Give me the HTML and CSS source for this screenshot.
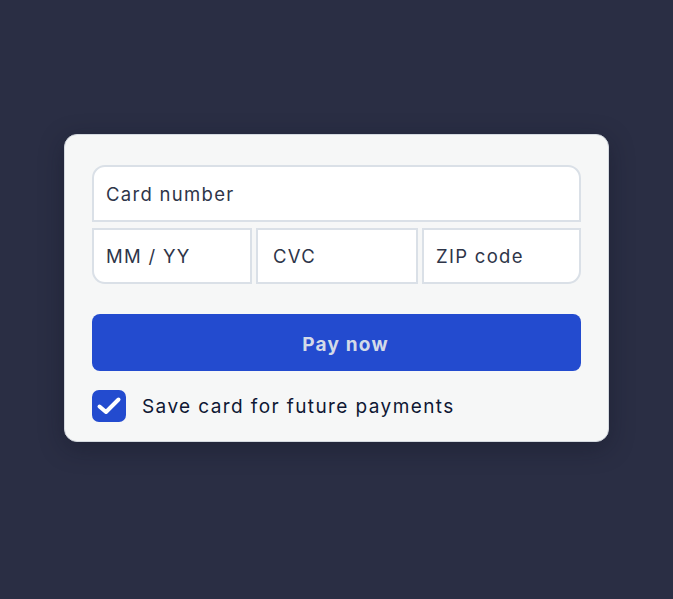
FILE: index.html
```html
<!DOCTYPE html>
<html lang="en">
<head>
<meta charset="utf-8">
<link rel="stylesheet" href="styles.css">
</head>
<body>
<div class="page">
  <form class="card">
    <div class="fields">
      <div class="field field-number">Card number</div>
      <div class="row">
        <div class="field field-exp">MM / YY</div>
        <div class="field field-cvc">CVC</div>
        <div class="field field-zip">ZIP code</div>
      </div>
    </div>
    <button type="button" class="pay">Pay now</button>
    <label class="save">
      <span class="check">
        <svg width="26" height="20" viewBox="0 0 26 20"><path d="M3.5 10.5 L10 16 L22.5 3.5" fill="none" stroke="#fff" stroke-width="4" stroke-linecap="round" stroke-linejoin="round"/></svg>
      </span>
      <span class="save-text">Save card for future payments</span>
    </label>
  </form>
</div>
</body>
</html>
```
FILE: styles.css
```css
html, body {
  margin: 0;
  padding: 0;
}
body {
  background: #2a2e44;
  font-family: Inter, "Open Sans", sans-serif;
  width: 673px;
  height: 599px;
  overflow: hidden;
}
.page {
  padding: 134px 0 0 64px;
}
.card {
  box-sizing: border-box;
  width: 545px;
  height: 308px;
  background: #f6f7f7;
  border: 1px solid #d4d9df;
  border-radius: 13px;
  padding: 30px 27px 0 27px;
  box-shadow: 0 6px 24px rgba(15, 18, 32, 0.35);
}
.fields {
  display: flex;
  flex-direction: column;
  gap: 6px;
}
.row {
  display: flex;
  gap: 4px;
}
.field {
  box-sizing: border-box;
  height: 56px;
  background: #fff;
  border: 2px solid #dae0e7;
  display: flex;
  align-items: center;
  padding-left: 12px;
  font-size: 18.5px;
  color: #2e3549;
  letter-spacing: 1.3px;
}
.field-number {
  width: 489px;
  height: 57px;
  border-radius: 13px 13px 0 0;
}
.field-exp {
  width: 160px;
  border-radius: 0 0 0 13px;
}
.field-cvc {
  width: 162px;
  padding-left: 15px;
}
.field-zip {
  width: 159px;
  border-radius: 0 0 13px 0;
}
.pay {
  display: block;
  margin-top: 30px;
  width: 489px;
  height: 57px;
  padding: 3px 0 0 18px;
  border: none;
  border-radius: 8px;
  background: #234bcf;
  color: #d3dae8;
  font-family: inherit;
  font-size: 19px;
  font-weight: 700;
  letter-spacing: 1.2px;
}
.save {
  display: flex;
  align-items: center;
  gap: 16px;
  margin-top: 19px;
}
.check {
  width: 34px;
  height: 32px;
  border-radius: 7px;
  background: #234bcf;
  display: flex;
  align-items: center;
  justify-content: center;
}
.check svg {
  display: block;
}
.save-text {
  font-size: 19px;
  color: #0f1734;
  letter-spacing: 1.4px;
}
```
